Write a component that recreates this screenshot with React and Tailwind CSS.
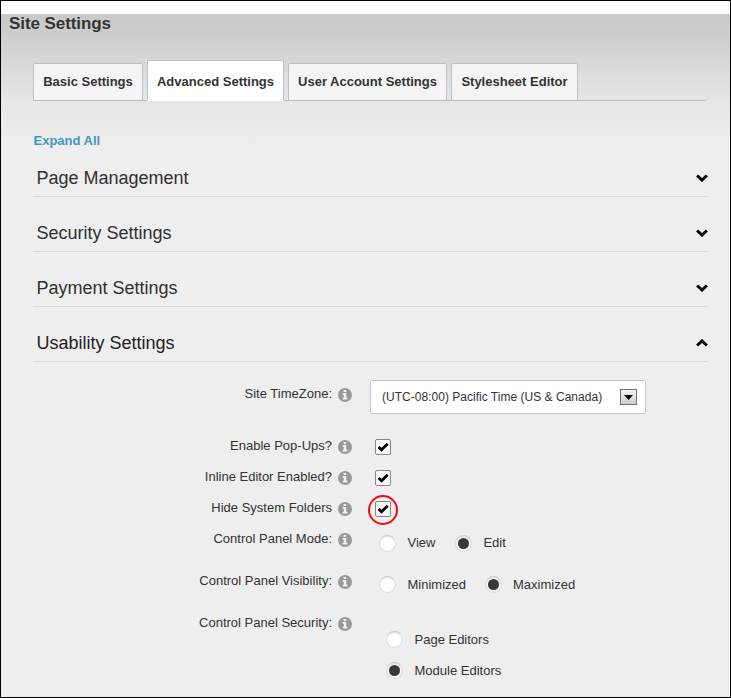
import React from "react";

const tabs = [
  { label: "Basic Settings", box: "w-[110px] h-[38px]" },
  { label: "Advanced Settings", box: "w-[137px] h-[41px]", active: true },
  { label: "User Account Settings", box: "w-[159px] h-[38px]" },
  { label: "Stylesheet Editor", box: "w-[127px] h-[38px]" },
];

function Tab({ label, box, active }) {
  const look = active
    ? "bg-white border-b-white pt-[11px]"
    : "bg-[#f4f4f4] border-b-[#bfbfbf] pt-[8px]";
  return (
    <div
      className={`${box} ${look} shrink-0 rounded-t-[2px] border border-x-[#bfbfbf] border-t-[#bfbfbf] text-center text-[13px] leading-[20px] font-bold whitespace-nowrap`}
    >
      {label}
    </div>
  );
}

function Chevron({ up }) {
  return (
    <svg width="12" height="8" viewBox="0 0 12 8" className="shrink-0">
      <path
        d={up ? "M1.1 6.5 L6 2 L10.9 6.5" : "M1.1 1.5 L6 6 L10.9 1.5"}
        fill="none"
        stroke="#000"
        strokeWidth="3"
      />
    </svg>
  );
}

function Section({ title, open }) {
  return (
    <div className="flex h-[55px] items-end justify-between border-b border-[#dadada]">
      <h2
        className={`pb-[8px] pl-[3.5px] text-[18px] leading-[20px] ${open ? "text-[#222]" : "text-[#303030]"}`}
      >
        {title}
      </h2>
      <div className="pb-[14px] leading-none">
        <Chevron up={open} />
      </div>
    </div>
  );
}

function Info() {
  return (
    <svg width="14" height="14" viewBox="0 0 14 14" className="mt-[4px] ml-[6px] shrink-0">
      <circle cx="7" cy="7" r="7" fill="#999" />
      <path d="M5.6 2h2.6v2.1H5.6z M4.7 5.1h3.5v4.7h1.1v1.6H4.7V9.8h1.1V6.7H4.7z" fill="#f2f2f2" />
    </svg>
  );
}

function Row({ label, height, children }) {
  return (
    <div className={`flex items-start ${height}`}>
      <div className="w-[299px] text-right text-[13px] leading-[20px] whitespace-nowrap">
        {label}
      </div>
      <Info />
      {children}
    </div>
  );
}

function Checkbox({ ringed }) {
  return (
    <div className="relative mt-[3px] ml-[23px] h-4 w-4 rounded-[2px] border border-[#868686] bg-[#f9f9f9]">
      <svg width="14" height="14" viewBox="0 0 14 14" className="block">
        <path d="M2.6 6.9 L5.5 9.7 L11.7 3.7" fill="none" stroke="#000" strokeWidth="2.8" />
      </svg>
      {ringed && (
        <div className="absolute -top-[7px] -left-[8px] h-[30px] w-[30px] rounded-full border-2 border-[#f40b12]" />
      )}
    </div>
  );
}

function Radio({ label, checked }) {
  return (
    <div className="flex h-[18px] items-center">
      <div
        className={`flex h-[17px] w-[17px] items-center justify-center rounded-full border border-[#dcdcdc] border-t-[#cacaca] shadow-[inset_0_1px_1px_#e2e2e2] ${checked ? "bg-[#f4f4f4]" : "bg-white"}`}
      >
        {checked && <div className="h-[11px] w-[11px] rounded-full bg-[#383838]" />}
      </div>
      <span className="ml-[11.5px] text-[13px] leading-[18px] whitespace-nowrap">{label}</span>
    </div>
  );
}

export default function App() {
  return (
    <div className="h-[698px] w-[731px] overflow-hidden border border-black bg-white pt-[13px] font-['Liberation_Sans',Arial,sans-serif] text-[#333]">
      <div className="h-[683px] bg-[#eee] bg-[linear-gradient(#c9c9c9_0px,#cdcdcd_20px,#e6e6e6_86px,#eee_130px)] pl-[8px]">
        <h1 className="h-[46px] pt-px text-[17px] leading-[18px] font-bold tracking-[-0.08px]">
          Site Settings
        </h1>
        <div className="ml-[24px] w-[675px]">
          <div className="flex h-[41px] items-end gap-1 rounded-br-[4px] border-b border-[#bfbfbf]">
            {tabs.map((t) => (
              <div key={t.label} className="-mb-px flex">
                <Tab {...t} />
              </div>
            ))}
          </div>
          <div className="h-[41px] pt-[30px] pl-[0.5px] text-[13px] leading-[20px] font-bold text-[#3f98b8]">
            Expand All
          </div>
          <Section title="Page Management" />
          <Section title="Security Settings" />
          <Section title="Payment Settings" />
          <Section title="Usability Settings" open />
          <div className="pt-[22px]">
            <Row label="Site TimeZone:" height="h-[52px]">
              <div className="-mt-[4px] ml-[18px] flex h-[34px] w-[276px] items-center justify-between rounded-[2px] border border-[#c6c6c6] bg-white pr-[8px] pl-[11px]">
                <span className="text-[12px] leading-[16px] tracking-[0.02px] whitespace-nowrap">
                  (UTC-08:00) Pacific Time (US &amp; Canada)
                </span>
                <div className="flex h-4 w-[17px] items-center justify-center border border-[#6f6f6f] bg-linear-to-b from-[#f4f4f4] to-[#cdcdcd]">
                  <svg width="9" height="5" viewBox="0 0 9 5">
                    <path d="M0 0h9L4.5 5z" fill="#000" />
                  </svg>
                </div>
              </div>
            </Row>
            <Row label="Enable Pop-Ups?" height="h-[31px]">
              <Checkbox />
            </Row>
            <Row label="Inline Editor Enabled?" height="h-[31px]">
              <Checkbox />
            </Row>
            <Row label="Hide System Folders" height="h-[31px]">
              <Checkbox ringed />
            </Row>
            <Row label="Control Panel Mode:" height="h-[42px]">
              <div className="mt-[5px] ml-[27px] flex gap-[19.5px]">
                <Radio label="View" />
                <Radio label="Edit" checked />
              </div>
            </Row>
            <Row label="Control Panel Visibility:" height="h-[42px]">
              <div className="mt-[4.5px] ml-[27px] flex gap-[18.5px]">
                <Radio label="Minimized" />
                <Radio label="Maximized" checked />
              </div>
            </Row>
            <Row label="Control Panel Security:" height="h-[70px]">
              <div className="mt-[17.5px] ml-[34px] flex flex-col gap-[13px]">
                <Radio label="Page Editors" />
                <Radio label="Module Editors" checked />
              </div>
            </Row>
          </div>
        </div>
      </div>
    </div>
  );
}
